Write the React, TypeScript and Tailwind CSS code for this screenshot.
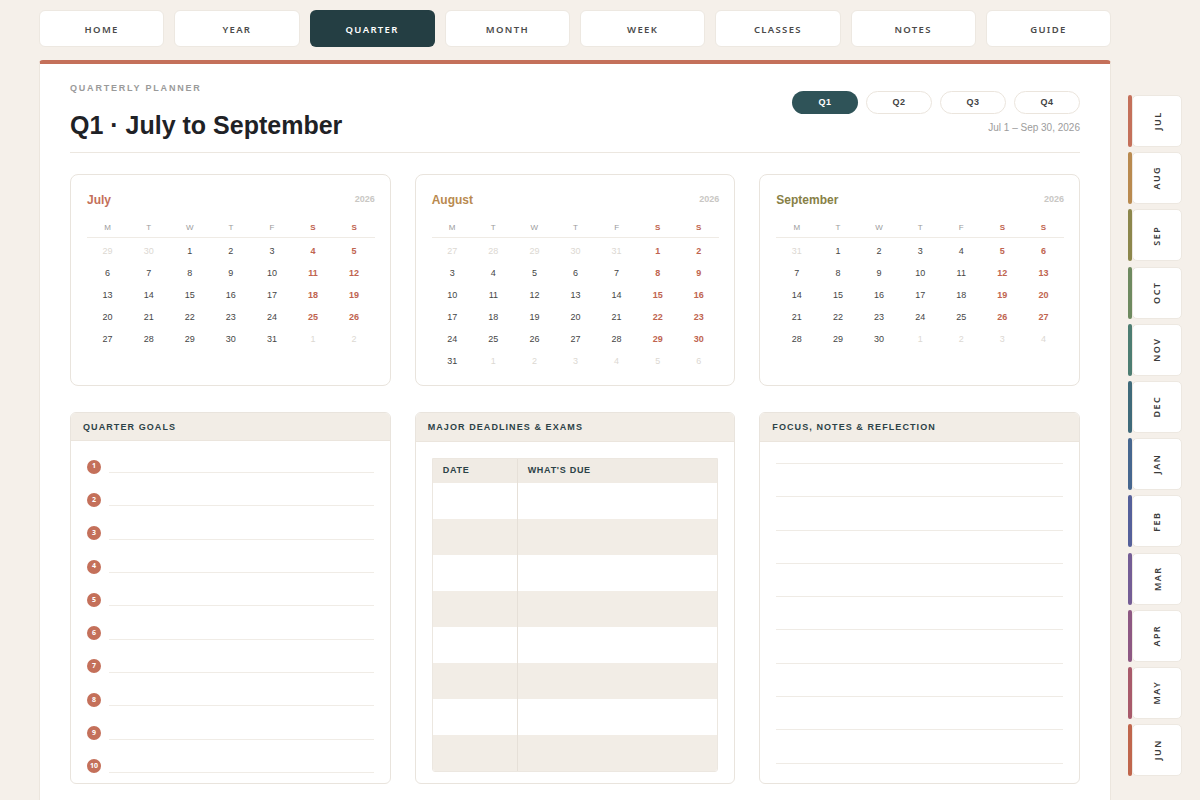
import React from 'react';

const NAV = ['HOME', 'YEAR', 'QUARTER', 'MONTH', 'WEEK', 'CLASSES', 'NOTES', 'GUIDE'];

const CAL = [
  { name: 'July', month: 6, color: 'text-[#c4705a]' },
  { name: 'August', month: 7, color: 'text-[#b98a4f]' },
  { name: 'September', month: 8, color: 'text-[#878046]' },
];

const TABS = [
  { label: 'JUL', strip: 'bg-[#c4705a]' },
  { label: 'AUG', strip: 'bg-[#b98a4f]' },
  { label: 'SEP', strip: 'bg-[#8c874c]' },
  { label: 'OCT', strip: 'bg-[#6e8a60]' },
  { label: 'NOV', strip: 'bg-[#4d7d72]' },
  { label: 'DEC', strip: 'bg-[#3f6a7a]' },
  { label: 'JAN', strip: 'bg-[#47678f]' },
  { label: 'FEB', strip: 'bg-[#55609a]' },
  { label: 'MAR', strip: 'bg-[#745d95]' },
  { label: 'APR', strip: 'bg-[#8d5883]' },
  { label: 'MAY', strip: 'bg-[#a85a6b]' },
  { label: 'JUN', strip: 'bg-[#c0664c]' },
];

const DOW = ['M', 'T', 'W', 'T', 'F', 'S', 'S'];

function monthDays(year: number, month: number) {
  const offset = (new Date(year, month, 1).getDay() + 6) % 7;
  const last = new Date(year, month + 1, 0).getDate();
  const total = Math.ceil((offset + last) / 7) * 7;
  const out: { day: number; inMonth: boolean; weekend: boolean }[] = [];
  for (let i = 0; i < total; i++) {
    const d = new Date(year, month, 1 - offset + i);
    out.push({ day: d.getDate(), inMonth: d.getMonth() === month, weekend: i % 7 >= 5 });
  }
  return out;
}

const MonthCard: React.FC<{ name: string; month: number; color: string }> = ({ name, month, color }) => {
  const days = monthDays(2026, month);
  return (
    <div className="rounded-[8px] border border-[#e9e4dd] bg-white pt-[17px] pr-[15px] pb-[12px] pl-[16px]">
      <div className="mb-[15px] flex items-center justify-between">
        <span className={`text-[12px] font-bold leading-[16px] ${color}`}>{name}</span>
        <span className="text-[9px] font-bold text-[#c9c7c4]">2026</span>
      </div>
      <div className="grid grid-cols-7 border-b border-[#efebe5] pb-[4px]">
        {DOW.map((d, i) => (
          <span
            key={i}
            className={`text-center text-[8px] leading-[10px] ${i >= 5 ? 'font-bold text-[#c0644f]' : 'text-[#9b9b9b]'}`}
          >
            {d}
          </span>
        ))}
      </div>
      <div className="grid grid-cols-7 pt-[3px]">
        {days.map((d, i) => (
          <span
            key={i}
            className={`flex h-[22px] items-center justify-center text-[9px] ${
              !d.inMonth
                ? 'text-[#dcd8d2]'
                : d.weekend
                ? 'font-bold text-[#c0644f]'
                : 'text-[#454545]'
            }`}
          >
            {d.day}
          </span>
        ))}
      </div>
    </div>
  );
};

const CardHeader: React.FC<{ title: string }> = ({ title }) => (
  <div className="flex h-[29px] items-center border-b border-[#ebe5dd] bg-[#f2ede6] px-[12px] pt-[2px]">
    <span className="text-[9px] font-bold tracking-[0.12em] text-[#2c4247]">{title}</span>
  </div>
);

export default function App() {
  return (
    <div
      className="flex h-[800px] w-[1200px] overflow-hidden bg-[#f5f0ea]"
      style={{ fontFamily: '"Liberation Sans", Arial, sans-serif' }}
    >
      <div className="ml-[39px] flex w-[1072px] flex-col">
        {/* top navigation */}
        <nav className="mt-[10px] grid grid-cols-8 gap-[10px]" style={{ fontFamily: '"Noto Sans", sans-serif' }}>
          {NAV.map((n) => (
            <div
              key={n}
              className={`flex h-[37px] items-center justify-center rounded-[6px] pt-[3px] text-[9.5px] font-semibold tracking-[0.14em] ${
                n === 'QUARTER'
                  ? 'bg-[#243e43] text-white'
                  : 'border border-[#ede8e1] bg-white text-[#4a4a4a]'
              }`}
            >
              {n}
            </div>
          ))}
        </nav>

        <main className="mt-[13px] flex-1 rounded-t-[4px] border-x border-t-[4px] border-x-[#ece6de] border-t-[#c4705a] bg-white pt-[20px] pr-[30px] pl-[30px]">
          <header className="flex items-start justify-between border-b border-[#ece7e0] pb-[12px]">
            <div>
              <div className="text-[9px] leading-[9px] font-semibold tracking-[0.2em] text-[#9a9a9a]">
                QUARTERLY PLANNER
              </div>
              <h1 className="mt-[17px] text-[25px] leading-[30px] font-bold text-[#1f2226]">
                Q1 · July to September
              </h1>
            </div>
            <div className="mt-[7px] flex flex-col items-end">
              <div className="flex gap-[8px]">
                {['Q1', 'Q2', 'Q3', 'Q4'].map((q) => (
                  <div
                    key={q}
                    className={`flex h-[23px] w-[66px] items-center justify-center rounded-full text-[9px] font-bold tracking-[0.05em] ${
                      q === 'Q1'
                        ? 'bg-[#2f5358] text-white'
                        : 'border border-[#ebe5dd] bg-white text-[#444]'
                    }`}
                  >
                    {q}
                  </div>
                ))}
              </div>
              <div className="mt-[7px] text-[10px] leading-[14px] text-[#9c9c9c]">Jul 1 – Sep 30, 2026</div>
            </div>
          </header>

          {/* month calendars */}
          <section className="mt-[21px] grid grid-cols-3 gap-[24px]">
            {CAL.map((c) => (
              <MonthCard key={c.name} {...c} />
            ))}
          </section>

          <section className="mt-[26px] grid h-[372px] grid-cols-3 gap-[24px]">
            {/* goals */}
            <div className="flex flex-col overflow-hidden rounded-[6px] border border-[#e9e4dd] bg-white">
              <CardHeader title="QUARTER GOALS" />
              <div className="px-[16px] pt-[9px]">
                {Array.from({ length: 10 }, (_, i) => (
                  <div key={i} className="flex h-[33.3px] items-center gap-[8px]">
                    <span
                      className="flex h-[14px] w-[14px] shrink-0 items-center justify-center rounded-full bg-[#c4705a] text-[7px] font-bold text-white"
                      style={{ fontFamily: '"Open Sans", sans-serif' }}
                    >
                      {i + 1}
                    </span>
                    <span className="mt-[12px] h-px flex-1 bg-[#f0ece6]" />
                  </div>
                ))}
              </div>
            </div>

            {/* deadlines */}
            <div className="flex flex-col overflow-hidden rounded-[6px] border border-[#e9e4dd] bg-white">
              <CardHeader title="MAJOR DEADLINES & EXAMS" />
              <div className="px-[16px] pt-[16px]">
                <div className="overflow-hidden rounded-b-[3px] border border-[#ece7e0]">
                  <div className="flex h-[24px] items-center bg-[#f0ebe4] text-[9px] font-bold tracking-[0.08em] text-[#2c4247]">
                    <span className="flex h-full w-[85px] items-center border-r border-[#e6e0d8] pl-[10px]">DATE</span>
                    <span className="pl-[10px]">WHAT'S DUE</span>
                  </div>
                  {Array.from({ length: 8 }, (_, i) => (
                    <div key={i} className={`flex h-[36px] ${i % 2 === 1 ? 'bg-[#f2ede6]' : 'bg-white'}`}>
                      <span className="w-[85px] border-r border-[#e6e0d8]" />
                      <span className="flex-1" />
                    </div>
                  ))}
                </div>
              </div>
            </div>

            {/* focus */}
            <div className="flex flex-col overflow-hidden rounded-[6px] border border-[#e9e4dd] bg-white">
              <CardHeader title="FOCUS, NOTES & REFLECTION" />
              <div className="flex flex-col gap-[32.3px] px-[16px] pt-[21px]">
                {Array.from({ length: 10 }, (_, i) => (
                  <span key={i} className="h-px bg-[#efebe5]" />
                ))}
              </div>
            </div>
          </section>
        </main>
      </div>

      {/* month tabs */}
      <aside className="ml-[17px] mt-[95px] flex flex-col gap-[5.2px]" style={{ fontFamily: '"Noto Sans", sans-serif' }}>
        {TABS.map((t) => (
          <div key={t.label} className="flex h-[52px] w-[54px]">
            <span className={`w-[4px] rounded-full ${t.strip}`} />
            <div className="flex flex-1 items-center justify-center rounded-[5px] border border-[#ede8e1] bg-white">
              <span className="-rotate-90 text-[9px] font-semibold tracking-[0.16em] text-[#3c3c3c]">{t.label}</span>
            </div>
          </div>
        ))}
      </aside>
    </div>
  );
}
